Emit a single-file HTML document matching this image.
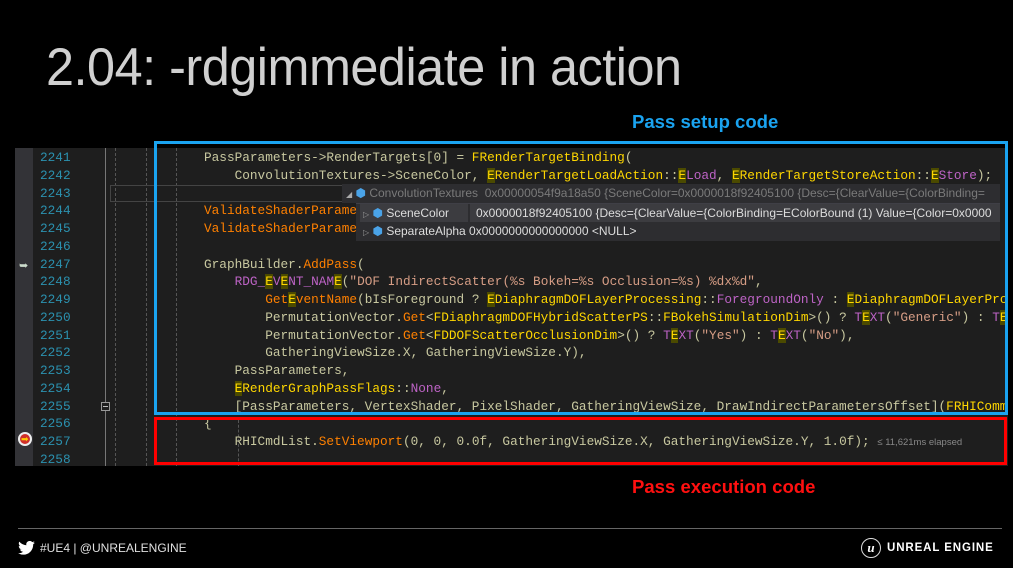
<!DOCTYPE html>
<html><head><meta charset="utf-8"><style>
*{margin:0;padding:0;box-sizing:border-box}
body{width:1013px;height:568px;background:#000;position:relative;overflow:hidden;font-family:"Liberation Sans",sans-serif}
.title{position:absolute;left:46px;top:37px;font-size:53px;color:#d0d0d0;font-weight:normal;letter-spacing:-0.5px;white-space:nowrap;transform:scaleX(0.95);transform-origin:left}
.lbl{position:absolute;font-weight:bold;font-size:18px;white-space:nowrap;transform:scaleX(1.03);transform-origin:left}
.ed{position:absolute;left:15px;top:148px;width:993px;height:318px;background:#1e1e1e}
.gut{position:absolute;left:15px;top:148px;width:18px;height:318px;background:#333337}
.ln{position:absolute;left:40px;color:#2b91af;font-family:"Liberation Mono",monospace;font-size:12.75px;line-height:17.75px}
.code{position:absolute;left:204px;font-family:"Liberation Mono",monospace;font-size:12.75px;line-height:17.75px;color:#c8c8a0;white-space:pre}
.f{color:#ff8000}.t{color:#ffd700}.m{color:#bd63c5}.s{color:#d69d85}.h{background:#4b4a00;color:#ffd700}
.vl{position:absolute;width:0;border-left:1px dashed #555}
.box{position:absolute}
.tip{position:absolute;font-family:"Liberation Sans",sans-serif;font-size:12px;white-space:nowrap;overflow:hidden}
</style></head><body>
<div class="title">2.04: -rdgimmediate in action</div>
<div class="lbl" style="left:632px;top:112px;color:#1aa3f0">Pass setup code</div>
<div class="lbl" style="left:632px;top:477px;color:#ff1010">Pass execution code</div>

<div class="ed"></div>
<div class="gut"></div>
<div style="position:absolute;left:105px;top:148px;width:1px;height:318px;background:#777"></div>
<div class="vl" style="left:115px;top:148px;height:318px"></div>
<div class="vl" style="left:146px;top:148px;height:318px"></div>
<div class="vl" style="left:176px;top:148px;height:318px"></div>
<div class="vl" style="left:238px;top:420px;height:46px"></div>
<div style="position:absolute;left:110px;top:185px;width:250px;height:17px;border:1px solid #444"></div>
<div style="position:absolute;left:101px;top:402px;width:9px;height:9px;border:1px solid #999;background:#1e1e1e"></div>
<div style="position:absolute;left:103px;top:406px;width:5px;height:1px;background:#bbb"></div>
<div style="position:absolute;left:19px;top:259px;color:#ccdccc;font-size:11px">➥</div>
<div style="position:absolute;left:18px;top:432px;width:14px;height:14px;border-radius:50%;background:#d0302a;border:2px solid #eee"></div>
<div style="position:absolute;left:21px;top:436px;color:#ffcc00;font-size:9px;line-height:6px">➡</div>

<div class="ln" style="top:149px">2241<br>2242<br>2243<br>2244<br>2245<br>2246<br>2247<br>2248<br>2249<br>2250<br>2251<br>2252<br>2253<br>2254<br>2255<br>2256<br>2257<br>2258</div>

<div class="code" style="top:149px">PassParameters-&gt;RenderTargets[0] = <span class="t">FRenderTargetBinding</span>(
    ConvolutionTextures-&gt;SceneColor, <span class="h">E</span><span class="t">RenderTargetLoadAction</span>::<span class="h">E</span><span class="m">Load</span>, <span class="h">E</span><span class="t">RenderTargetStoreAction</span>::<span class="h">E</span><span class="m">Store</span>);

<span class="f">ValidateShaderParameters</span>
<span class="f">ValidateShaderParameters</span>

GraphBuilder.<span class="f">AddPass</span>(
    <span class="m">RDG_</span><span class="h">E</span><span class="m">V</span><span class="h">E</span><span class="m">NT_NAM</span><span class="h">E</span>(<span class="s">"DOF IndirectScatter(%s Bokeh=%s Occlusion=%s) %dx%d"</span>,
        <span class="f">Get</span><span class="h">E</span><span class="f">ventName</span>(bIsForeground ? <span class="h">E</span><span class="t">DiaphragmDOFLayerProcessing</span>::<span class="m">ForegroundOnly</span> : <span class="h">E</span><span class="t">DiaphragmDOFLayerProcessing</span>
        PermutationVector.<span class="f">Get</span>&lt;<span class="t">FDiaphragmDOFHybridScatterPS</span>::<span class="t">FBokehSimulationDim</span>&gt;() ? <span class="m">T</span><span class="h">E</span><span class="m">XT</span>(<span class="s">"Generic"</span>) : <span class="m">T</span><span class="h">E</span>
        PermutationVector.<span class="f">Get</span>&lt;<span class="t">FDDOFScatterOcclusionDim</span>&gt;() ? <span class="m">T</span><span class="h">E</span><span class="m">XT</span>(<span class="s">"Yes"</span>) : <span class="m">T</span><span class="h">E</span><span class="m">XT</span>(<span class="s">"No"</span>),
        GatheringViewSize.X, GatheringViewSize.Y),
    PassParameters,
    <span class="h">E</span><span class="t">RenderGraphPassFlags</span>::<span class="m">None</span>,
    [PassParameters, VertexShader, PixelShader, GatheringViewSize, DrawIndirectParametersOffset](<span class="t">FRHIComm</span>
{
    RHICmdList.<span class="f">SetViewport</span>(0, 0, 0.0f, GatheringViewSize.X, GatheringViewSize.Y, 1.0f); <span style="font-family:'Liberation Sans',sans-serif;font-size:9.5px;color:#888">≤ 11,621ms elapsed</span>
</div>
<div style="position:absolute;left:1008px;top:148px;width:5px;height:320px;background:#000"></div>

<div class="tip" style="left:342px;top:184px;width:658px;height:19px;background:#2d2d30;color:#7a7a7a;line-height:19px;padding-left:4px"><span style="color:#aaa;font-size:8px">◢</span> <span style="color:#4aa3e8">⬢</span> ConvolutionTextures&nbsp; 0x00000054f9a18a50 {SceneColor=0x0000018f92405100 {Desc={ClearValue={ColorBinding=</div>
<div class="tip" style="left:356px;top:203px;width:644px;height:38px;background:#2d2d30;border-top:1px solid #3f3f46"></div>
<div class="tip" style="left:360px;top:204px;width:108px;height:18px;background:#3c3c40;color:#ddd;line-height:18px;padding-left:3px"><span style="color:#999;font-size:8px">▷</span> <span style="color:#4aa3e8">⬢</span> SceneColor</div>
<div class="tip" style="left:470px;top:204px;width:530px;height:18px;background:#3c3c40;color:#ddd;line-height:18px;padding-left:6px">0x0000018f92405100 {Desc={ClearValue={ColorBinding=EColorBound (1) Value={Color=0x0000</div>
<div class="tip" style="left:360px;top:222px;width:300px;height:18px;color:#ddd;line-height:18px;padding-left:3px"><span style="color:#999;font-size:8px">▷</span> <span style="color:#4aa3e8">⬢</span> SeparateAlpha&nbsp;0x0000000000000000 &lt;NULL&gt;</div>

<div class="box" style="left:154px;top:141px;width:854px;height:274px;border:3px solid #1aa3f0"></div>
<div class="box" style="left:154px;top:417px;width:853px;height:48px;border:3px solid #ff0000"></div>

<div style="position:absolute;left:18px;top:528px;width:984px;height:1px;background:#666"></div>
<svg style="position:absolute;left:18px;top:541px" width="17" height="14" viewBox="0 0 24 20"><path fill="#fff" d="M24 2.4a10 10 0 0 1-2.8.8A5 5 0 0 0 23.3.4a10 10 0 0 1-3.1 1.2A4.9 4.9 0 0 0 11.8 6 14 14 0 0 1 1.7.9a4.9 4.9 0 0 0 1.5 6.6 4.9 4.9 0 0 1-2.2-.6 4.9 4.9 0 0 0 3.9 4.9 4.9 4.9 0 0 1-2.2.1 4.9 4.9 0 0 0 4.6 3.4A9.9 9.9 0 0 1 0 17.3 14 14 0 0 0 7.5 19.5c9.1 0 14-7.5 14-14v-.6A10 10 0 0 0 24 2.4z"/></svg>
<div style="position:absolute;left:40px;top:541px;color:#e0e0e0;font-size:12px">#UE4 | @UNREALENGINE</div>
<div style="position:absolute;left:861px;top:538px;width:20px;height:20px;border-radius:50%;border:1.5px solid #ddd;color:#fff;font:bold italic 13px 'Liberation Serif',serif;text-align:center;line-height:17px">u</div>
<div style="position:absolute;left:887px;top:542px;color:#fff;font-weight:bold;font-size:11.5px;letter-spacing:0.9px">UNREAL ENGINE</div>
</body></html>
